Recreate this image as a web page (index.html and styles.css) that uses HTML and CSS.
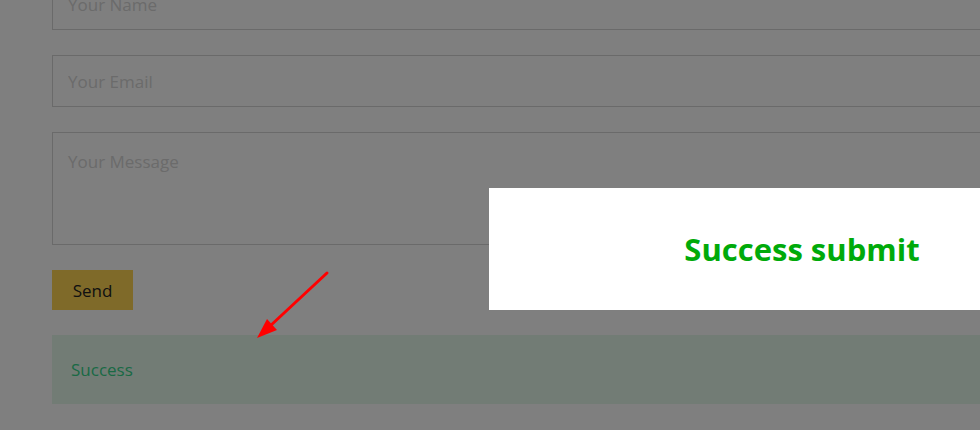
FILE: index.html
```html
<!DOCTYPE html>
<html lang="en">
<head>
    <meta charset="UTF-8">
    <meta name="viewport" content="width=device-width, initial-scale=1.0">
    <title>Contact</title>
    <link rel="stylesheet" href="styles.css">
</head>
<body>
    <div class="container">
        <form class="contact-form">
            <input type="text" class="field" placeholder="Your Name">
            <input type="email" class="field" placeholder="Your Email">
            <textarea class="field message" placeholder="Your Message"></textarea>
            <div><button type="button" class="button">Send</button></div>
            <div class="alert success">Success</div>
        </form>
    </div>

    <div class="overlay"></div>
    <div class="modal">
        <h2>Success submit</h2>
    </div>

    <svg class="pointer" width="90" height="80" viewBox="0 0 90 80">
        <line x1="74" y1="5" x2="16" y2="59" stroke="#ff0000" stroke-width="3" stroke-linecap="round"/>
        <polygon points="4,70 14,51 24,62" fill="#ff0000"/>
    </svg>
</body>
</html>
```

FILE: styles.css
```css
html, body {
    overflow: hidden;
}
body {
    font-family: 'Open Sans', 'Noto Sans', sans-serif;
    margin: 0;
    background: #ffffff;
    width: 980px;
    height: 430px;
}
.container {
    padding-left: 52px;
    margin-top: -22px;
    width: 1100px;
}
.contact-form {
    display: flex;
    flex-direction: column;
    gap: 25px;
}
.field {
    display: block;
    box-sizing: border-box;
    width: 100%;
    height: 52px;
    padding: 0 15px;
    border: 1px solid #d4d4d4;
    background: #ffffff;
    font-family: inherit;
    font-size: 17px;
    color: #333;
    outline: none;
}
.field::placeholder {
    color: #d6d6d6;
}
.message {
    height: 113px;
    padding: 17px 15px;
    line-height: 24px;
    resize: none;
}
.button {
    display: block;
    background: #ffd452;
    color: #222;
    border: none;
    width: 81px;
    height: 40px;
    font-family: inherit;
    font-size: 17px;
    cursor: pointer;
}
.alert {
    box-sizing: border-box;
    height: 69px;
    padding: 0 19px;
    display: flex;
    align-items: center;
    font-size: 17px;
}
.alert.success {
    background: #e4f8eb;
    color: #34d48a;
}
.overlay {
    position: fixed;
    inset: 0;
    background: rgba(0,0,0,0.5);
}
.modal {
    position: fixed;
    left: 489px;
    top: 188px;
    width: 626px;
    height: 122px;
    background: #ffffff;
    display: flex;
    align-items: center;
    justify-content: center;
}
.modal h2 {
    margin: 0;
    color: #00aa0a;
    font-size: 31px;
    font-weight: 700;
}
.pointer {
    position: fixed;
    left: 253px;
    top: 268px;
}
```
